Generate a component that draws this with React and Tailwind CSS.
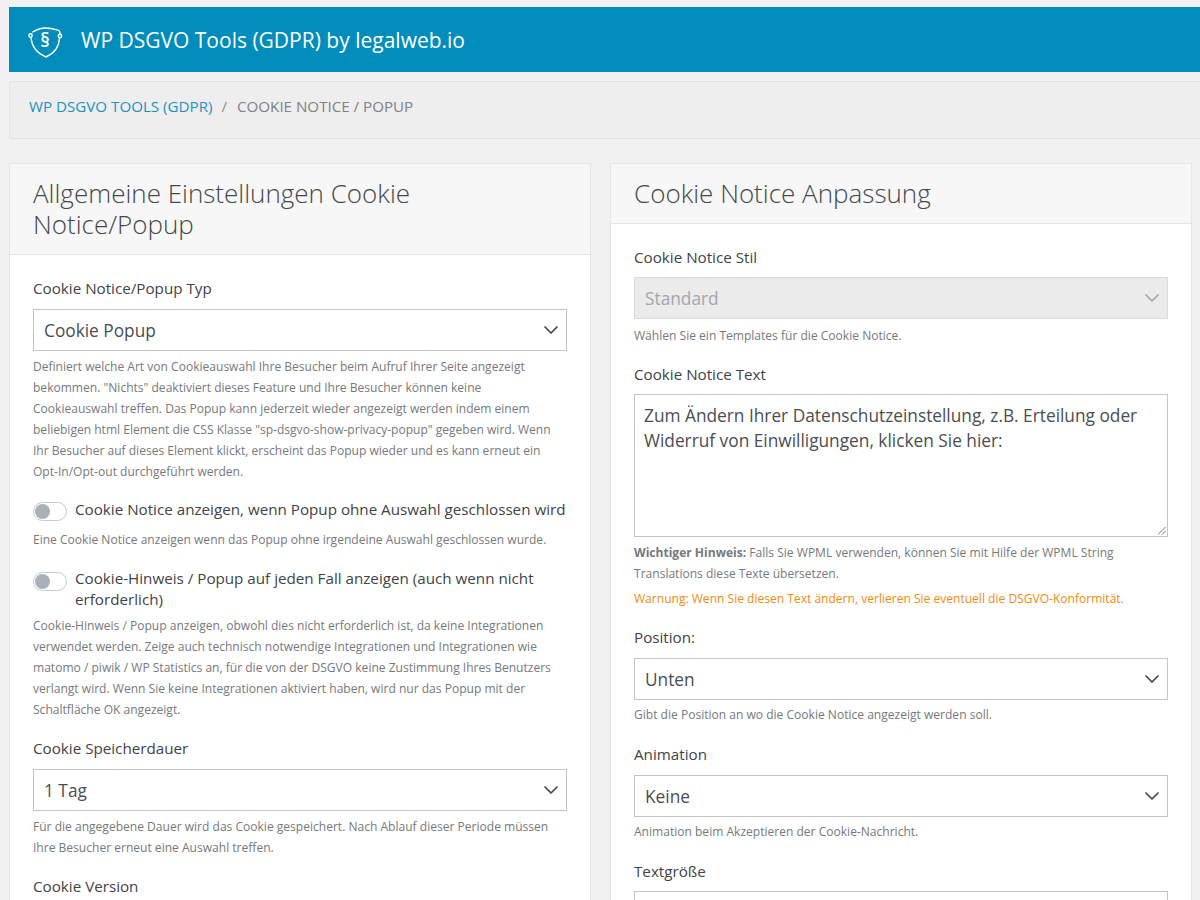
import React from 'react';
import { ChevronDown } from 'lucide-react';

const Label = ({ children, className = '' }) => (
  <div className={`text-[15.2px] leading-[21px] text-[#3f4347] ${className}`}>{children}</div>
);

const Help = ({ children, className = '' }) => (
  <p className={`text-[12.05px] leading-[21px] text-[#77797c] ${className}`}>{children}</p>
);

const Select = ({ value, disabled = false, className = 'mt-[10px]' }) => (
  <div className={`flex h-[42px] items-center justify-between border pl-[10px] pr-[3px] text-[17.3px] ${className} ${disabled ? 'border-[#dcdcdc] bg-[#ebebeb] text-[#a3a7ab]' : 'border-[#c4c4c4] bg-white text-[#4a4e52]'}`}>
    <span className="mt-[2px]">{value}</span>
    <ChevronDown size={24} strokeWidth={1.75} className={disabled ? 'text-[#a5a8ab]' : 'text-[#44484c]'} />
  </div>
);

const Toggle = ({ className }) => (
  <span className={`flex h-[19px] w-[34px] shrink-0 items-center rounded-full border-[1.5px] border-[#c3cbd3] bg-white pl-[1px] ${className}`}>
    <span className="h-[15px] w-[15px] rounded-full bg-[#a9b0b8]" />
  </span>
);

const Card = ({ title, children }) => (
  <section className="w-[582px] shrink-0 border border-[#e6e6e6] bg-white">
    <h2 className="border-b border-[#e4e4e4] bg-[#f7f7f7] px-[23px] py-[14px] text-[26px] font-light leading-[31px] text-[#44484c]">{title}</h2>
    <div className="px-[23px] pt-[23px]">{children}</div>
  </section>
);

const Logo = () => (
  <svg width="38" height="38" viewBox="0 0 38 38" fill="none" stroke="white" strokeWidth="1.4" strokeLinecap="round" strokeLinejoin="round" className="shrink-0">
    <path d="M5.7 11C10 8.5 14 7 18 7C23 7 27 8 31 9.2C32.3 9.6 33 10.3 33 11.5V13" />
    <path d="M4 17C5 26 10.5 32.5 19 36C27 32.5 32 26 32.5 17" />
    <circle cx="3.5" cy="14.5" r="1.7" />
    <circle cx="33" cy="15" r="1.7" />
    <text x="18" y="25.5" fontFamily="'Open Sans', sans-serif" fontSize="19" fontWeight="600" fill="white" stroke="none" textAnchor="middle">§</text>
  </svg>
);

export default function App() {
  return (
    <div className="h-[900px] w-[1200px] overflow-hidden bg-[#f1f1f1] pl-[9px] pt-[7px] font-['Open_Sans',sans-serif]">
      <header className="flex h-[65px] items-center bg-[#018dbc] pl-[18px] text-white">
        <Logo />
        <span className="ml-[16px] pt-[2px] text-[21px]">WP DSGVO Tools (GDPR) by legalweb.io</span>
      </header>

      <nav className="mt-[9px] h-[58px] rounded-l-[3px] border border-r-0 border-[#e2e2e2] bg-[#eeeeee] pl-[19px] pt-[14px] text-[15.15px] leading-[20px]">
        <span className="text-[#1c93bf]">WP DSGVO TOOLS (GDPR)</span>
        <span className="ml-[9px] mr-[10px] text-[#8a8c8e]">/</span>
        <span className="text-[#808285]">COOKIE NOTICE / POPUP</span>
      </nav>

      <main className="mt-[24px] flex gap-[19px]">
        <Card title="Allgemeine Einstellungen Cookie Notice/Popup">
          <Label>Cookie Notice/Popup Typ</Label>
          <Select value="Cookie Popup" />
          <Help className="mt-[5px]">Definiert welche Art von Cookieauswahl Ihre Besucher beim Aufruf Ihrer Seite angezeigt bekommen. "Nichts" deaktiviert dieses Feature und Ihre Besucher können keine Cookieauswahl treffen. Das Popup kann jederzeit wieder angezeigt werden indem einem beliebigen html Element die CSS Klasse "sp-dsgvo-show-privacy-popup" gegeben wird. Wenn Ihr Besucher auf dieses Element klickt, erscheint das Popup wieder und es kann erneut ein <span className="whitespace-nowrap">Opt-In/Opt-out</span> durchgeführt werden.</Help>

          <div className="mt-[17px] flex gap-[8px]">
            <Toggle className="mt-[3px]" />
            <span className="text-[15.2px] leading-[21px] text-[#3f4347]">Cookie Notice anzeigen, wenn Popup ohne Auswahl geschlossen wird</span>
          </div>
          <Help className="mt-[8px]">Eine Cookie Notice anzeigen wenn das Popup ohne irgendeine Auswahl geschlossen wurde.</Help>

          <div className="mt-[18px] flex gap-[8px]">
            <Toggle className="mt-[4px]" />
            <span className="text-[15.2px] leading-[21px] text-[#3f4347]">Cookie-Hinweis / Popup auf jeden Fall anzeigen (auch wenn nicht erforderlich)</span>
          </div>
          <Help className="mt-[5px]">Cookie-Hinweis / Popup anzeigen, obwohl dies nicht erforderlich ist, da keine Integrationen verwendet werden. Zeige auch technisch notwendige Integrationen und Integrationen wie matomo / piwik / WP Statistics an, für die von der DSGVO keine Zustimmung Ihres Benutzers verlangt wird. Wenn Sie keine Integrationen aktiviert haben, wird nur das Popup mit der Schaltfläche OK angezeigt.</Help>

          <Label className="mt-[18px]">Cookie Speicherdauer</Label>
          <Select value="1 Tag" />
          <Help className="mt-[5px]">Für die angegebene Dauer wird das Cookie gespeichert. Nach Ablauf dieser Periode müssen Ihre Besucher erneut eine Auswahl treffen.</Help>
          <Label className="mt-[18px]">Cookie Version</Label>
        </Card>

        <Card title="Cookie Notice Anpassung">
          <Label>Cookie Notice Stil</Label>
          <Select value="Standard" disabled className="mt-[9px]" />
          <Help className="mt-[6px]">Wählen Sie ein Templates für die Cookie Notice.</Help>

          <Label className="mt-[18px]">Cookie Notice Text</Label>
          <div className="relative mt-[9px] h-[143px] border border-[#c4c4c4] bg-white px-[9px] py-[8px] text-[17.3px] leading-[25px] text-[#4a4e52]">
            Zum Ändern Ihrer Datenschutzeinstellung, z.B. Erteilung oder Widerruf von Einwilligungen, klicken Sie hier:
            <svg width="9" height="9" viewBox="0 0 9 9" className="absolute bottom-[1px] right-[1px]" stroke="#777" strokeWidth="1" fill="none">
              <path d="M1 8.5L8.5 1M5 8.5L8.5 5" />
            </svg>
          </div>
          <Help className="mt-[5px]"><b className="font-bold">Wichtiger Hinweis:</b> Falls Sie WPML verwenden, können Sie mit Hilfe der WPML String Translations diese Texte übersetzen.</Help>
          <Help className="mt-[4px] text-[#f28c13]">Warnung: Wenn Sie diesen Text ändern, verlieren Sie eventuell die DSGVO-Konformität.</Help>

          <Label className="mt-[18px]">Position:</Label>
          <Select value="Unten" />
          <Help className="mt-[4px]">Gibt die Position an wo die Cookie Notice angezeigt werden soll.</Help>

          <Label className="mt-[19px]">Animation</Label>
          <Select value="Keine" />
          <Help className="mt-[4px]">Animation beim Akzeptieren der Cookie-Nachricht.</Help>

          <Label className="mt-[19px]">Textgröße</Label>
          <div className="mt-[9px] h-[43px] border border-[#c4c4c4] bg-white" />
        </Card>
      </main>
    </div>
  );
}
